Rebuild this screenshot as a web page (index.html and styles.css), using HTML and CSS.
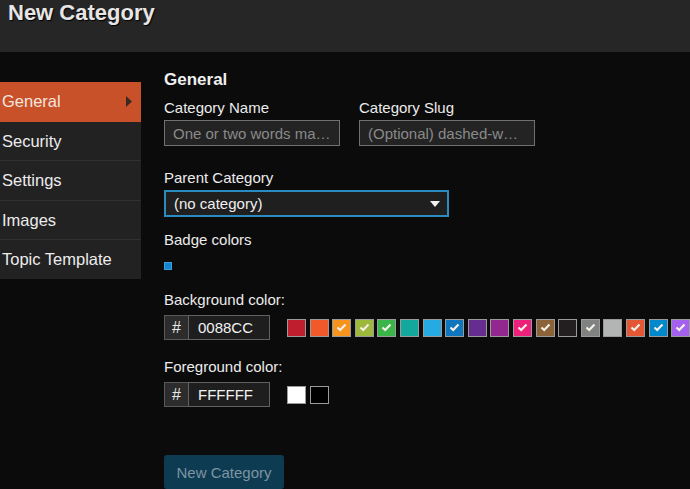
FILE: index.html
```html
<!DOCTYPE html>
<html lang="en">
<head>
  <meta charset="UTF-8" />
  <meta name="viewport" content="width=device-width, initial-scale=1.0" />
  <title>New Category</title>
  <link rel="stylesheet" href="styles.css">
</head>
<body>
  <header class="modal-header">
    <h1>New Category</h1>
  </header>

  <div class="modal-body">
    <ul class="nav-stacked">
      <li class="active">General
        <svg class="caret" width="6" height="11" viewBox="0 0 6 11"><polygon points="0,0 6,5.5 0,11" fill="#3b2820"/></svg>
      </li>
      <li>Security</li>
      <li>Settings</li>
      <li>Images</li>
      <li>Topic Template</li>
    </ul>

    <div class="edit-panel">
      <h2>General</h2>

      <div class="row">
        <div class="field">
          <label>Category Name</label>
          <input type="text" placeholder="One or two words ma…">
        </div>
        <div class="field">
          <label>Category Slug</label>
          <input type="text" placeholder="(Optional) dashed-w…">
        </div>
      </div>

      <div class="field parent">
        <label>Parent Category</label>
        <div class="select">
          <span>(no category)</span>
          <svg width="10" height="6" viewBox="0 0 10 6"><polygon points="0,0 10,0 5,6" fill="#f2f2f2"/></svg>
        </div>
      </div>

      <label class="badge-label">Badge colors</label>
      <div class="badge-preview"></div>

      <label class="color-label">Background color:</label>
      <div class="color-row">
        <div class="hex-group">
          <span class="hash">#</span>
          <span class="hex">0088CC</span>
        </div>
        <div class="swatches" id="bg-swatches"></div>
      </div>

      <label class="color-label">Foreground color:</label>
      <div class="color-row">
        <div class="hex-group">
          <span class="hash">#</span>
          <span class="hex">FFFFFF</span>
        </div>
        <div class="swatches" id="fg-swatches"></div>
      </div>

      <button class="btn-create" disabled>New Category</button>
    </div>
  </div>

  <script>
    // Discourse default palette; "used" colours get a check mark
    const bgColors = [
      ['#BF1E2E', false], ['#F1592A', false], ['#F7941D', true], ['#9EB83B', true],
      ['#3AB54A', true], ['#12A89D', false], ['#25AAE2', false], ['#0E76BD', true],
      ['#652D90', false], ['#92278F', false], ['#ED207B', true], ['#8C6238', true],
      ['#231F20', false], ['#808281', true], ['#B3B5B4', false], ['#E45735', true],
      ['#0088CC', true], ['#A461EF', true]
    ];
    const fgColors = [['#FFFFFF', false], ['#000000', false]];

    const check = '<svg width="11" height="9" viewBox="0 0 11 9"><polyline points="1.5,4.5 4.2,7 9.5,1.5" fill="none" stroke="#f4efe6" stroke-width="2.2"/></svg>';

    function fillSwatches(id, colors) {
      const box = document.getElementById(id);
      colors.forEach(([color, used]) => {
        const sw = document.createElement('span');
        sw.className = 'swatch';
        sw.style.backgroundColor = color;
        if (used) sw.innerHTML = check;
        box.appendChild(sw);
      });
    }

    fillSwatches('bg-swatches', bgColors);
    fillSwatches('fg-swatches', fgColors);
  </script>
</body>
</html>
```

FILE: styles.css
```css
/* Dark modal: new category form */
html, body {
  overflow: hidden;
}
body {
  margin: 0;
  background-color: #0b0b0b;
  font-family: 'Liberation Sans', Arial, sans-serif;
  color: #e9e9e9;
  font-size: 15px;
}
.modal-header {
  height: 52px;
  background-color: #262626;
  padding: 0 8px;
}
.modal-header h1 {
  margin: 0;
  font-size: 22px;
  line-height: 26px;
  font-weight: bold;
  color: #e6e6e6;
  text-shadow: 1px 1px 1px #000;
}
.modal-body {
  display: flex;
  align-items: flex-start;
}
.nav-stacked {
  list-style: none;
  margin: 30px 0 0;
  padding: 0;
  width: 141px;
  flex-shrink: 0;
  background-color: #222;
}
.nav-stacked li {
  position: relative;
  height: 38.5px;
  line-height: 38px;
  padding-left: 2px;
  font-size: 16.5px;
  color: #ececec;
  border-bottom: 1px solid #303030;
}
.nav-stacked li:last-child {
  border-bottom: none;
}
.nav-stacked li.active {
  background-color: #c8512a;
  color: #f3e6df;
  border-bottom-color: #c8512a;
}
.nav-stacked .caret {
  position: absolute;
  right: 9px;
  top: 14px;
}
.edit-panel {
  margin-left: 23px;
  padding-top: 18px;
  flex-shrink: 0;
}
.edit-panel h2 {
  margin: 0 0 9px;
  font-size: 17px;
  line-height: 20px;
  font-weight: bold;
  color: #efefef;
}
label {
  display: block;
  line-height: 18px;
  color: #ececec;
}
.row {
  display: flex;
  gap: 19px;
}
.field label {
  margin-bottom: 3px;
}
.field input {
  box-sizing: border-box;
  width: 176px;
  height: 26px;
  margin: 0;
  padding: 0 8px;
  background-color: #232323;
  border: 1px solid #707070;
  color: #eee;
  font-family: inherit;
  font-size: 15px;
}
.field input::placeholder {
  color: #8a8a8a;
}
.parent {
  margin-top: 23px;
}
.parent label {
  margin-bottom: 3px;
}
.select {
  box-sizing: border-box;
  width: 285px;
  height: 27px;
  display: flex;
  align-items: center;
  justify-content: space-between;
  padding: 0 7px 0 8px;
  background-color: #1f1f1f;
  border: 2px solid #2b8ac0;
  color: #f0f0f0;
}
.badge-label {
  margin-top: 14px;
}
.badge-preview {
  box-sizing: border-box;
  width: 8px;
  height: 8px;
  margin-top: 13px;
  background-color: #1283cc;
  border: 1px solid #3aa0e0;
}
.color-label {
  margin-top: 21px;
  margin-bottom: 6px;
}
.color-row + .color-label {
  margin-top: 18px;
}
.color-row {
  display: flex;
  align-items: center;
}
.hex-group {
  display: flex;
  height: 25px;
  flex-shrink: 0;
}
.hash {
  box-sizing: border-box;
  width: 24px;
  display: flex;
  align-items: center;
  justify-content: center;
  background-color: #2c2c2c;
  border: 1px solid #595959;
  border-right: none;
  font-size: 16px;
}
.hex {
  box-sizing: border-box;
  width: 82px;
  display: flex;
  align-items: center;
  padding-left: 9px;
  background-color: #1e1e1e;
  border: 1px solid #616161;
  color: #f2f2f2;
}
.swatches {
  display: flex;
  margin-left: 17px;
  flex-shrink: 0;
}
.swatch {
  box-sizing: border-box;
  width: 19px;
  height: 18px;
  margin-right: 3.6px;
  border: 1px solid #9a9a9a;
  display: flex;
  align-items: center;
  justify-content: center;
  flex-shrink: 0;
}
.btn-create {
  display: block;
  margin-top: 48px;
  width: 120px;
  height: 34px;
  background-color: #0d3b52;
  color: #7d94a1;
  border: none;
  border-radius: 3px;
  font-family: inherit;
  font-size: 15px;
  padding: 0;
}
```
